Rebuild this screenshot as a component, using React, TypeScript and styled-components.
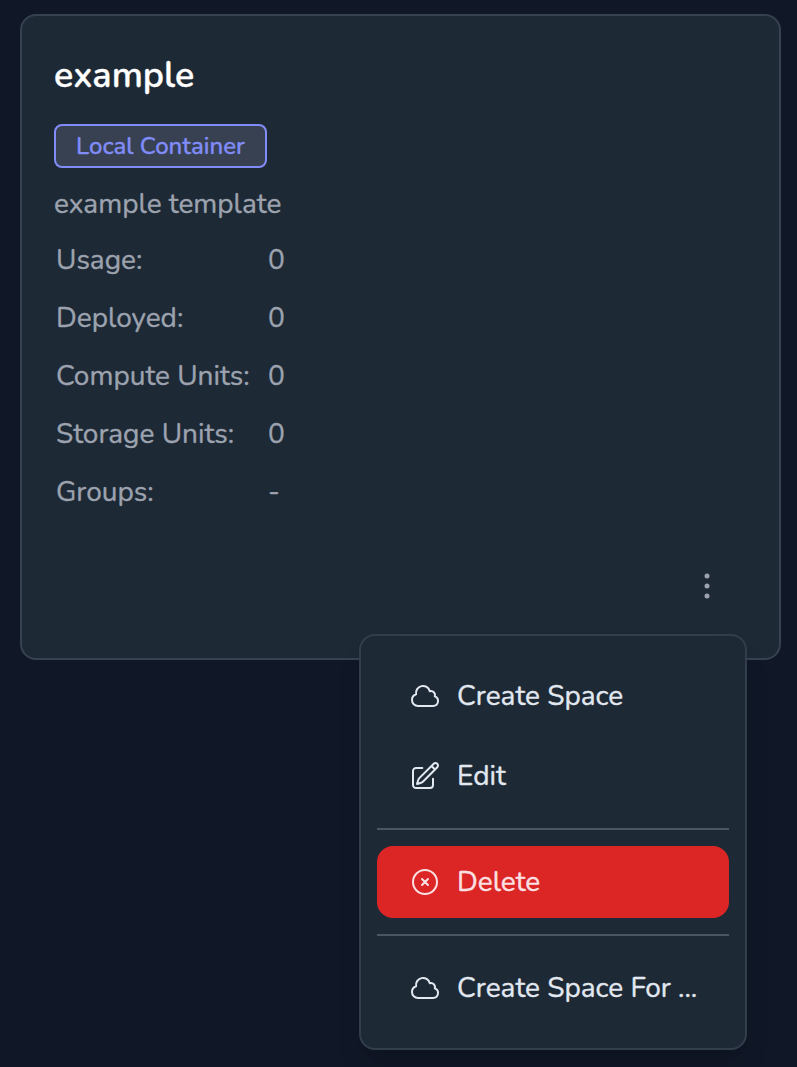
import React from 'react';
import styled, { createGlobalStyle } from 'styled-components';

const GlobalStyle = createGlobalStyle`
  *, *::before, *::after { box-sizing: border-box; }
  html, body { margin: 0; padding: 0; }
  body {
    min-height: 100vh;
    background: #101726;
    font-family: Nunito, Lato, "Open Sans", sans-serif;
    color: #9ca3af;
    -webkit-font-smoothing: antialiased;
  }
`;

const Page = styled.main`
  height: 1067px;
  padding: 14px 16px 0 20px;
  overflow: hidden;
`;

const Card = styled.article`
  display: flex;
  flex-direction: column;
  position: relative;
  height: 646px;
  padding: 32px;
  background: #1e2936;
  border: 2px solid #36424f;
  border-radius: 16px;
`;

const Label = styled.span`
  white-space: nowrap;
  -webkit-text-stroke: 0.35px currentColor;
`;

const Title = styled.h2`
  margin: 0;
  height: 56px;
  font-size: 36px;
  line-height: 56px;
  font-weight: 600;
  color: #ffffff;
`;

const Badge = styled.span`
  display: flex;
  align-items: center;
  align-self: flex-start;
  width: 213px;
  height: 44px;
  margin-top: 20px;
  padding: 0 20px;
  font-size: 24px;
  font-weight: 500;
  color: #818cf8;
  background: #374151;
  border: 2px solid #818cf8;
  border-radius: 8px;
`;

const Description = styled.p`
  margin: 16px 0 0;
  font-size: 28px;
  line-height: 40px;
`;

const Facts = styled.dl`
  display: grid;
  grid-template-columns: 212px 1fr;
  grid-auto-rows: 58px;
  align-items: center;
  margin: 7px 0 0;
  padding-left: 2px;
  font-size: 28px;
  line-height: 40px;
`;

const Term = styled.dt``;
const Value = styled.dd`
  margin: 0;
`;

const MoreButton = styled.button`
  display: flex;
  align-self: flex-end;
  margin: 45px 20px 0 0;
  padding: 0;
  color: #9ca3af;
  background: none;
  border: 0;
`;

const Menu = styled.div`
  position: absolute;
  left: 337px;
  top: 618px;
  width: 388px;
  height: 416px;
  padding: 24px 16px;
  background: #1e2936;
  border: 2px solid #323e4b;
  border-radius: 16px;
  box-shadow: 0 20px 30px -6px rgba(0, 0, 0, 0.12), 0 8px 12px -8px rgba(0, 0, 0, 0.1);
`;

const MenuItem = styled.button<{ $danger?: boolean; $gap?: number }>`
  display: flex;
  align-items: center;
  gap: 16px;
  width: 100%;
  height: 72px;
  margin-top: ${(p) => p.$gap ?? 0}px;
  padding: 0 32px;
  font-family: inherit;
  font-size: 28px;
  line-height: 40px;
  color: ${(p) => (p.$danger ? '#fbe0e3' : '#e2e8f0')};
  background: ${(p) => (p.$danger ? '#dc2626' : 'transparent')};
  border: 0;
  border-radius: 16px;
  text-align: left;
`;

const Divider = styled.hr`
  height: 2px;
  margin: 16px 0;
  border: 0;
  background: #4b5663;
`;

const IconSvg = styled.svg`
  flex: none;
  width: 32px;
  height: 32px;
  fill: none;
  stroke: currentColor;
  stroke-width: 1.5;
  stroke-linecap: round;
  stroke-linejoin: round;
`;

const DotsSvg = styled.svg`
  width: 40px;
  height: 40px;
  fill: currentColor;
`;

const paths = {
  cloud:
    'M2.25 15a4.5 4.5 0 0 0 4.5 4.5H18a3.75 3.75 0 0 0 1.332-7.257 3 3 0 0 0-3.758-3.848 5.25 5.25 0 0 0-10.233 2.33A4.502 4.502 0 0 0 2.25 15Z',
  edit:
    'm16.862 4.487 1.687-1.688a1.875 1.875 0 1 1 2.652 2.652L10.582 16.07a4.5 4.5 0 0 1-1.897 1.13L6 18l.8-2.685a4.5 4.5 0 0 1 1.13-1.897l8.932-8.931Zm0 0L19.5 7.125M18 14v4.75A2.25 2.25 0 0 1 15.75 21H5.25A2.25 2.25 0 0 1 3 18.75V8.25A2.25 2.25 0 0 1 5.25 6H10',
  remove: 'm9.75 9.75 4.5 4.5m0-4.5-4.5 4.5M21 12a9 9 0 1 1-18 0 9 9 0 0 1 18 0Z',
};

const Icon = ({ name }: { name: keyof typeof paths }) => (
  <IconSvg viewBox="0 0 24 24" aria-hidden="true">
    <path d={paths[name]} />
  </IconSvg>
);

const facts = [
  { label: 'Usage:', value: '0' },
  { label: 'Deployed:', value: '0' },
  { label: 'Compute Units:', value: '0' },
  { label: 'Storage Units:', value: '0' },
  { label: 'Groups:', value: '-' },
];

export default function App() {
  return (
    <>
      <GlobalStyle />
      <Page>
        <Card>
          <Title><Label>example</Label></Title>
          <Badge><Label>Local Container</Label></Badge>
          <Description><Label>example template</Label></Description>
          <Facts>
            {facts.map((f) => (
              <React.Fragment key={f.label}>
                <Term><Label>{f.label}</Label></Term>
                <Value><Label>{f.value}</Label></Value>
              </React.Fragment>
            ))}
          </Facts>
          <MoreButton aria-label="More actions">
            <DotsSvg viewBox="0 0 24 24">
              <circle cx="12" cy="6" r="1.5" />
              <circle cx="12" cy="12" r="1.5" />
              <circle cx="12" cy="18" r="1.5" />
            </DotsSvg>
          </MoreButton>
          <Menu>
            <MenuItem><Icon name="cloud" /><Label>Create Space</Label></MenuItem>
            <MenuItem $gap={8}><Icon name="edit" /><Label>Edit</Label></MenuItem>
            <Divider />
            <MenuItem $danger><Icon name="remove" /><Label>Delete</Label></MenuItem>
            <Divider />
            <MenuItem><Icon name="cloud" /><Label>Create Space For ...</Label></MenuItem>
          </Menu>
        </Card>
      </Page>
    </>
  );
}
